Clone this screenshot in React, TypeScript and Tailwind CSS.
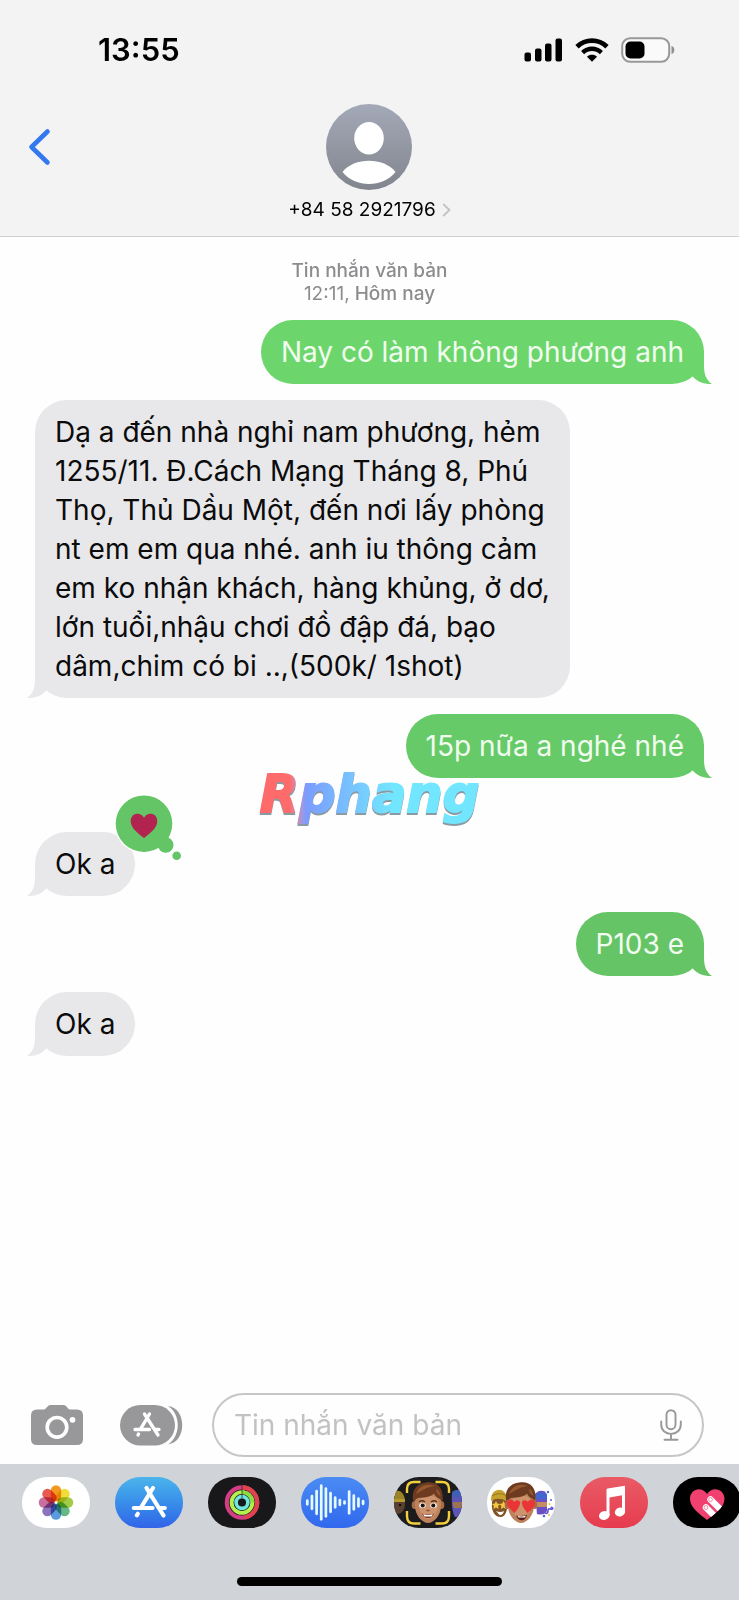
import React from 'react';
import clsx from 'clsx';

type Message = {
  id: number;
  text: string;
  mine: boolean;
  tone: string;
  loved?: boolean;
};

const messages: Message[] = [
  { id: 1, text: 'Nay có làm không phương anh', mine: true, tone: 'bg-[#6cd66c] text-[#6cd66c]' },
  {
    id: 2,
    text: 'Dạ a đến nhà nghỉ nam phương, hẻm 1255/11. Đ.Cách Mạng Tháng 8, Phú Thọ, Thủ Dầu Một, đến nơi lấy phòng nt em em qua nhé. anh iu thông cảm em ko nhận khách, hàng khủng, ở dơ, lớn tuổi,nhậu chơi đồ đập đá, bạo dâm,chim có bi ..,(500k/ 1shot)',
    mine: false,
    tone: 'bg-[#e8e8ea] text-[#e8e8ea]',
  },
  { id: 3, text: '15p nữa a nghé nhé', mine: true, tone: 'bg-[#67ca68] text-[#67ca68]' },
  { id: 4, text: 'Ok a', mine: false, tone: 'bg-[#e8e8ea] text-[#e8e8ea]', loved: true },
  { id: 5, text: 'P103 e', mine: true, tone: 'bg-[#65c466] text-[#65c466]' },
  { id: 6, text: 'Ok a', mine: false, tone: 'bg-[#e8e8ea] text-[#e8e8ea]' },
];

const StatusBar: React.FC = () => (
  <div className="flex items-center justify-between pt-8 pr-16 pl-[98px]">
    <span className="text-[31px] leading-9 font-semibold text-black">13:55</span>
    <div className="flex items-center gap-3">
      <svg width="39" height="24" viewBox="0 0 39 24" aria-label="Signal">
        <rect x="0.5" y="14.5" width="6.5" height="9" rx="2" />
        <rect x="11" y="10.5" width="6.5" height="13" rx="2" />
        <rect x="21" y="5.5" width="6.5" height="18" rx="2" />
        <rect x="31.5" y="0.5" width="6.5" height="23" rx="2" />
      </svg>
      <svg width="34" height="24" viewBox="0 0 34 24" fill="none" stroke="#000" aria-label="Wi-Fi">
        <path d="M2 8.7 C10.5 0.6 23.5 0.6 32 8.7" strokeWidth="4.8" />
        <path d="M7.6 14.6 C13 9.4 21 9.4 26.4 14.6" strokeWidth="4.4" />
        <path d="M17 23.8 L12 18.7 C14.8 16.2 19.2 16.2 22 18.7 Z" fill="#000" stroke="none" />
      </svg>
      <svg width="54" height="26" viewBox="0 0 54 26" aria-label="Battery">
        <rect x="1.2" y="1.2" width="47" height="23.6" rx="8" fill="#fafafa" stroke="#98989a" strokeWidth="2" />
        <rect x="4.5" y="4.5" width="19" height="17" rx="5" />
        <path d="M50.5 9 C54.3 10 54.3 16 50.5 17 Z" fill="#8f8f91" />
      </svg>
    </div>
  </div>
);

const Avatar: React.FC = () => (
  <svg width="86" height="86" viewBox="0 0 86 86" aria-hidden="true">
    <defs>
      <linearGradient id="avatar" x1="0" y1="0" x2="0" y2="1">
        <stop offset="0" stopColor="#a4a9b8" />
        <stop offset="1" stopColor="#81858d" />
      </linearGradient>
    </defs>
    <circle cx="43" cy="43" r="43" fill="url(#avatar)" />
    <ellipse cx="43" cy="34.3" rx="14.8" ry="16.2" fill="#fff" />
    <path d="M16.5 68 C28 53 58 53 69.5 68 C57 84 29 84 16.5 68 Z" fill="#fff" />
  </svg>
);

const Header: React.FC = () => (
  <header className="border-b border-[#cfcfd1] bg-[#f3f3f4]">
    <StatusBar />
    <div className="grid grid-cols-[1fr_auto_1fr] items-start pt-9 pb-[15px]">
      <button type="button" aria-label="Back" className="justify-self-start pt-6 pl-7">
        <svg width="24" height="38" viewBox="0 0 24 38" fill="none" stroke="#3478f0" strokeWidth="4.6" strokeLinecap="round" strokeLinejoin="round">
          <path d="M19.5 3.5 L3.5 19 L19.5 34.5" />
        </svg>
      </button>
      <button type="button" className="flex flex-col items-center gap-[9px] text-[19px] leading-[22px] text-black">
        <Avatar />
        <span className="flex items-center gap-[6px]">
          +84 58 2921796
          <svg width="9" height="14" viewBox="0 0 9 14" fill="none" stroke="#c3c3c6" strokeWidth="1.8">
            <path d="M1.2 1 L7.5 7 L1.2 13" />
          </svg>
        </span>
      </button>
    </div>
  </header>
);

const LoveReaction: React.FC = () => (
  <svg className="absolute -top-10 left-[78px]" width="72" height="72" viewBox="0 0 72 72" aria-label="Loved">
    <g fill="#fff">
      <circle cx="31" cy="31.7" r="29.8" />
      <circle cx="52.7" cy="53" r="9" />
    </g>
    <g fill="#64c566">
      <circle cx="31" cy="31.7" r="28.3" />
      <circle cx="52.7" cy="53" r="7.8" />
      <circle cx="63.7" cy="63.7" r="4.3" />
    </g>
    <path
      d="M31 46 C26 42 17.7 36.5 17.7 29.3 C17.7 20.8 27.6 19.5 31 25.8 C34.4 19.5 44.3 20.8 44.3 29.3 C44.3 36.5 36 42 31 46 Z"
      fill="#b32350"
    />
  </svg>
);

const Bubble: React.FC<{ message: Message }> = ({ message }) => (
  <li
    className={clsx(
      'relative max-w-[535px] rounded-[32px] px-5 pt-[13px] pb-3',
      message.mine ? 'self-end' : 'self-start',
      message.loved && 'mt-[38px]',
      message.tone,
    )}
  >
    <p className={clsx('text-[28px] leading-[39px]', message.mine ? 'text-[#f1fcef]' : 'text-[#0b0b0c]')}>
      {message.text}
    </p>
    <svg
      className={clsx('absolute bottom-0', message.mine ? '-right-2' : '-left-2 -scale-x-100')}
      width="24"
      height="34"
      viewBox="0 0 24 34"
      fill="currentColor"
      aria-hidden="true"
    >
      <path d="M16 0 V15 C16 24 18 30 24 34 C16 34.5 10 32 5 27 L2 10 Z" />
    </svg>
    {message.loved && <LoveReaction />}
  </li>
);

const Composer: React.FC = () => (
  <form className="flex items-center gap-[29px] pt-2 pr-[35px] pb-[7px] pl-[31px]">
    <button type="button" aria-label="Camera" className="shrink-0">
      <svg width="53" height="42" viewBox="0 0 53 42">
        <path
          d="M6 5.5 H13 C15.5 5.5 16 1 19.5 1 H32.5 C36 1 36.5 5.5 39 5.5 H46 Q52 5.5 52 11.5 V35 Q52 41 46 41 H6 Q0 41 0 35 V11.5 Q0 5.5 6 5.5 Z"
          fill="#98989a"
        />
        <circle cx="26" cy="23.3" r="9.8" fill="none" stroke="#fff" strokeWidth="3.6" />
        <circle cx="41.5" cy="15.8" r="2.9" fill="#fff" />
      </svg>
    </button>
    <button type="button" aria-label="Apps" className="shrink-0 pl-[7px]">
      <svg width="63" height="42" viewBox="0 0 63 42">
        <path d="M48 2 C67 4 67 38 48 40.5 C61 32 61 10 48 2 Z" fill="#98989a" />
        <rect x="0" y="1" width="55" height="40.5" rx="20.2" fill="#98989a" />
        <g fill="none" stroke="#fff" strokeWidth="3.3" strokeLinecap="round">
          <path d="M29.5 10 L20.5 25.2" />
          <path d="M24.5 10 L38 31" />
          <path d="M15 25.5 H29.5 M35.5 25.5 H39" />
          <path d="M18.5 30 L18 31" />
        </g>
      </svg>
    </button>
    <div className="flex h-16 min-w-0 flex-1 items-center rounded-full border-2 border-[#c6c6c8] px-5">
      <input
        type="text"
        aria-label="Tin nhắn văn bản"
        placeholder="Tin nhắn văn bản"
        className="min-w-0 flex-1 bg-transparent text-[28px] leading-[39px] outline-none placeholder:text-[#c2c2c4]"
      />
      <button type="button" aria-label="Dictate" className="shrink-0">
        <svg width="22" height="32" viewBox="0 0 22 32" fill="none" stroke="#98989a" strokeWidth="1.9" strokeLinecap="round">
          <rect x="6.5" y="1.2" width="9" height="19" rx="4.5" />
          <path d="M1.2 12.5 V15.5 C1.2 28 20.8 28 20.8 15.5 V12.5 M11 25 V30.5 M4.5 30.7 H17.5" />
        </svg>
      </button>
    </div>
  </form>
);

const petals = ['#f29a1f', '#f2dc3c', '#a3cb45', '#66b886', '#5a9bdb', '#8c74bd', '#c8719f', '#e85a50'];

const PhotosIcon = () => (
  <svg viewBox="0 0 68 51">
    {petals.map((color, i) => (
      <rect
        key={color}
        x="28.8"
        y="8.2"
        width="10.4"
        height="16"
        rx="5.2"
        fill={color}
        className="mix-blend-multiply"
        transform={`rotate(${i * 45} 34 25.5)`}
      />
    ))}
  </svg>
);

const AppStoreIcon = () => (
  <svg viewBox="0 0 68 51" fill="none" stroke="#fff" strokeWidth="4.2" strokeLinecap="round">
    <path d="M38 11 L26 30.5" />
    <path d="M31.5 11 L48.5 38.5" />
    <path d="M18.8 31 H37.5 M46 31 H49.8" />
    <path d="M22.8 36.8 L21.8 38.3" />
  </svg>
);

const ActivityIcon = () => (
  <svg viewBox="0 0 68 51" fill="none">
    <circle cx="34" cy="25.5" r="15.2" stroke="#d33d84" strokeWidth="4.2" />
    <path d="M34 10.3 A15.2 15.2 0 0 1 37 40.4" stroke="#e0434d" strokeWidth="4.2" />
    <circle cx="34" cy="25.5" r="10.4" stroke="#b5f14c" strokeWidth="3.9" />
    <path d="M34 15.1 A10.4 10.4 0 0 1 44.4 25.5" stroke="#8ddb42" strokeWidth="3.9" />
    <circle cx="34" cy="25.5" r="5.9" stroke="#6fe5df" strokeWidth="3.7" />
    <path d="M34 8 V22" stroke="#333" strokeWidth="0.8" />
  </svg>
);

const waveBars = [6, 15, 25, 36, 30, 21, 12, 7, 4, 24, 16, 10, 5];

const VoiceIcon = () => (
  <svg viewBox="0 0 68 51" stroke="#e4fbff" strokeWidth="2.7" strokeLinecap="round">
    {waveBars.map((h, i) => (
      <path key={i} d={`M${6.3 + i * 4.65} ${26.7 - h / 2} v${h - 2.4}`} />
    ))}
  </svg>
);

// Boy's head shared by both Memoji apps
const Face: React.FC<{ hearts?: boolean }> = ({ hearts }) => (
  <g>
    <ellipse cx="20.5" cy="28" rx="2.8" ry="4" fill="#a96c48" />
    <ellipse cx="47.5" cy="28" rx="2.8" ry="4" fill="#a96c48" />
    <path d="M21 20 C21 11 47 11 47 20 V29 C47 38 40 46 34 46 C28 46 21 38 21 29 Z" fill="#bd825c" />
    <path d="M25 24 C28 17 40 17 44 23 C46 32 40 42 34 42 C28 42 24 32 25 24 Z" fill="#cc936c" />
    <path d="M19.5 25 C17 15 21 7 32 5.5 C45 3.5 50 13 48.5 25 L46 22 C43 21 41 19 40 16.5 C36 21 27 20.5 24 21 C22 22 21 23 19.5 25 Z" fill="#6e3b20" />
    <path d="M22 17 C25 8 34 6 41 9 C35 9 29 13 22 17 Z M42 12 C45 13 46 16 46.5 19 C44 18 42 15 42 12 Z" fill="#96592f" />
    {hearts ? (
      <g fill="#e93536">
        <path d="M27.5 36 C23 32 19 29 20 25 C21.5 21.5 26 22 27 25 C30 21.5 34 23.5 33 27 C32 31 29.5 33 27.5 36 Z" />
        <path d="M40.5 36 C38.5 33 36 31 35 27 C34 23.5 38 21.5 41 25 C42 22 46.500 21.5 48 25 C49 29 45 32 40.5 36 Z" />
        <path d="M29 38.5 Q35 40 40 37.5 C39 45 31 45 29 38.5 Z" fill="#5b1d18" />
        <path d="M30.5 39 Q35 40 39 38.5 L38 40.5 H31.5 Z" fill="#fff" />
      </g>
    ) : (
      <g>
        <path d="M25 25 Q28 22.5 31 25 M37 25 Q40 22.5 43 25" stroke="#5a3018" strokeWidth="1.3" fill="none" />
        <ellipse cx="28.5" cy="28.5" rx="3.2" ry="2.5" fill="#fff" />
        <ellipse cx="39.5" cy="28.5" rx="3.2" ry="2.5" fill="#fff" />
        <circle cx="28.7" cy="28.5" r="2.1" fill="#1d1310" />
        <circle cx="39.3" cy="28.5" r="2.1" fill="#1d1310" />
        <path d="M32.5 33 Q34 34.5 35.5 33" stroke="#8f553a" strokeWidth="1.5" fill="none" />
        <path d="M28 36.5 Q34 38.5 40 36.5 C38 42.5 30 42.5 28 36.5 Z" fill="#7a2f25" />
        <path d="M29 37 Q34 38.8 39 37 L37.5 39.5 H30.5 Z" fill="#fff" />
      </g>
    )}
  </g>
);

const MemojiIcon = () => (
  <svg viewBox="0 0 68 51">
    <ellipse cx="4" cy="27" rx="7" ry="10" fill="#5b4230" />
    <path d="M-3 24 C-3 11 10 10 11 24 Z" fill="#9b8328" />
    <path d="M-3 22 H11 V25 H-3 Z" fill="#b59a32" />
    <circle cx="6" cy="28" r="1.3" fill="#15100c" />
    <path d="M58 16 Q63 11 72 13 V40 H61 Q57 34 58 16 Z" fill="#5b55b8" />
    <path d="M58 15 Q62 11 72 14 V20 H59 Z" fill="#3f5eb5" />
    <path d="M58.5 25 H70 V31 H59.5 Z" fill="#9c7253" />
    <Face />
    <path
      d="M13 16 V12 Q13 5 20 5 H26.5 M41.5 5 H48 Q55 5 55 12 V16 M55 34 V39 Q55 46.5 48 46.5 H41.5 M26.5 46.5 H20 Q13 46.5 13 39 V34"
      fill="none"
      stroke="#f2cf3e"
      strokeWidth="2.4"
    />
  </svg>
);

const StickersIcon = () => (
  <svg viewBox="0 0 68 51">
    <path d="M5 26 C5 17 20 17 20 26 C21 34 18 40 13.5 40 C8 40 4 34 5 26 Z" fill="#805329" />
    <path d="M4 23 C4 10 19 9 20 22 L19 24 C14 21 9 21 4 24 Z" fill="#c6a12d" />
    <path d="M5 19 C10 16 15 16 20 19" stroke="#8f7120" strokeWidth="0.9" fill="none" />
    <path d="M9 24 l1.3 2.6 2.8 .4 -2 2 .5 2.9 -2.6 -1.3 -2.6 1.3 .5 -2.9 -2 -2 2.8 -.4 Z M16.5 24 l1.3 2.6 2.8 .4 -2 2 .5 2.9 -2.6 -1.3 -2.6 1.3 .5 -2.9 -2 -2 2.8 -.4 Z" fill="#f2c53d" />
    <path d="M9 34 Q13.5 36 17 34 Q16 38.5 12.5 38 Z" fill="#fff" />
    <path d="M48 17 Q52 12 58 14.5 L60 18 V34 Q57 39 50 37 Z" fill="#6a50c4" />
    <path d="M48 18 Q53 13 60 17 V22 H49 Z" fill="#4166cf" />
    <path d="M49 25 H60 V30 H49 Z" fill="#c58e61" />
    <path d="M58 36 C63 38 59 31 63 32 C68 33 65 29 64 31" stroke="#6250d8" strokeWidth="1.6" fill="none" />
    <g fill="#4c67dd">
      <circle cx="61" cy="15" r="1.2" />
      <circle cx="64" cy="23" r="1" />
      <circle cx="57" cy="39" r="1.3" />
      <circle cx="62.5" cy="27" r="1" fill="#efc13b" />
      <circle cx="62" cy="38" r="1" fill="#efc13b" />
    </g>
    <Face hearts />
  </svg>
);

const MusicIcon = () => (
  <svg viewBox="0 0 68 51" fill="#fff">
    <path d="M26.5 12.5 Q26.5 11.8 27.5 11.5 L45 8.8 V34.5 H42 V18.2 L29.5 20.5 V38 H26.5 Z" />
    <ellipse cx="24.3" cy="38.5" rx="5.4" ry="4.3" transform="rotate(-15 24.3 38.5)" />
    <ellipse cx="40" cy="35" rx="5.2" ry="4.3" transform="rotate(-15 40 35)" />
  </svg>
);

const TouchIcon = () => (
  <svg viewBox="0 0 68 51">
    <defs>
      <clipPath id="touch-heart">
        <path d="M34 43 C28 38 17 31 17 22 C17 11.5 29 9 34 17 C39 9 51.5 11.5 51.5 22 C51.5 31 40 38 34 43 Z" />
      </clipPath>
    </defs>
    <g clipPath="url(#touch-heart)">
      <rect width="68" height="51" fill="#ef4070" />
      <g stroke="#fff" strokeWidth="6.4" strokeLinecap="round">
        <path d="M37.5 22.5 L50 35" />
        <path d="M33 30.5 L44 41.5" />
      </g>
      <g fill="#fff" stroke="#ef8aa5" strokeWidth="1">
        <circle cx="37.5" cy="22.5" r="1.9" />
        <circle cx="33" cy="30.5" r="1.9" />
      </g>
    </g>
  </svg>
);

const apps = [
  { name: 'Photos', tone: 'bg-white', Icon: PhotosIcon },
  { name: 'App Store', tone: 'bg-linear-to-b from-[#4bb5ea] to-[#3163e8]', Icon: AppStoreIcon },
  { name: 'Activity', tone: 'bg-[#18181a]', Icon: ActivityIcon },
  { name: 'Audio', tone: 'bg-linear-to-b from-[#4b8bf3] to-[#3168ee]', Icon: VoiceIcon },
  { name: 'Memoji', tone: 'bg-[#1c1c1e]', Icon: MemojiIcon },
  { name: 'Stickers', tone: 'bg-white', Icon: StickersIcon },
  { name: 'Music', tone: 'bg-linear-to-b from-[#e95a66] to-[#e63b4e]', Icon: MusicIcon },
  { name: 'Digital Touch', tone: 'bg-black', Icon: TouchIcon },
];

const AppDrawer: React.FC = () => (
  <nav className="flex flex-col gap-[49px] bg-[#d0d3d8] pt-[13px] pb-[14px]">
    <div className="flex gap-[25px] overflow-hidden pl-[22px]">
      {apps.map(({ name, tone, Icon }) => (
        <button
          key={name}
          type="button"
          aria-label={name}
          className={clsx('h-[51px] w-[68px] shrink-0 overflow-hidden rounded-[25px]', tone)}
        >
          <Icon />
        </button>
      ))}
    </div>
    <div className="h-[9px] w-[265px] self-center rounded-full bg-black" />
  </nav>
);

export default function App() {
  return (
    <div className="flex min-h-screen flex-col bg-[#fefefe] font-['Inter',sans-serif]">
      <Header />
      <main className="relative flex-1 px-[35px]">
        <div className="pt-[22px] text-center text-[19px] leading-[23px] font-medium text-[#8c8c8f]">
          <p>Tin nhắn văn bản</p>
          <p><span className="font-normal">12:11,</span> Hôm nay</p>
        </div>
        <ul className="flex flex-col gap-4 pt-[15px]">
          {messages.map((message) => (
            <Bubble key={message.id} message={message} />
          ))}
        </ul>
        {/* Site watermark */}
        <div className="pointer-events-none absolute inset-x-0 top-[525px] text-center">
          <span className="bg-linear-to-r from-[#ff6b6b] from-16% via-[#7a9cff] via-23% to-[#72e6ff] to-60% bg-clip-text px-2 font-['DejaVu_Sans',sans-serif] text-[51px] leading-[66px] font-bold text-transparent italic drop-shadow-[0_2px_0_#8a9aa3] [-webkit-text-stroke:2px_transparent]">
            Rphang
          </span>
        </div>
      </main>
      <Composer />
      <AppDrawer />
    </div>
  );
}
